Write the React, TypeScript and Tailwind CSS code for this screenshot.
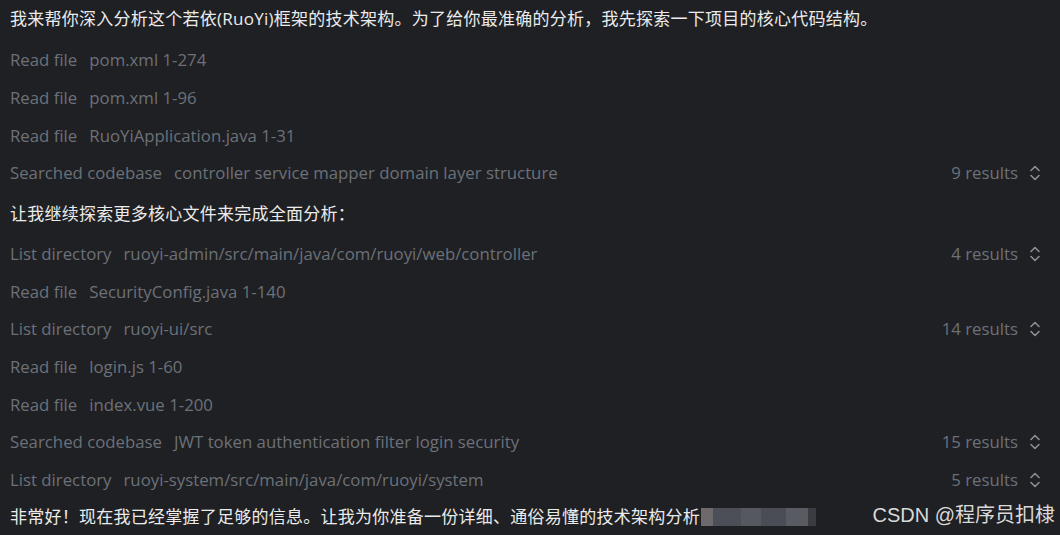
import React from "react";

type Row =
  | { kind: "zh"; text: string }
  | { kind: "tool"; label: string; value: string; results?: string };

const rows: Row[] = [
  { kind: "tool", label: "Read file", value: "pom.xml 1-274" },
  { kind: "tool", label: "Read file", value: "pom.xml 1-96" },
  { kind: "tool", label: "Read file", value: "RuoYiApplication.java 1-31" },
  { kind: "tool", label: "Searched codebase", value: "controller service mapper domain layer structure", results: "9 results" },
  { kind: "zh", text: "让我继续探索更多核心文件来完成全面分析：" },
  { kind: "tool", label: "List directory", value: "ruoyi-admin/src/main/java/com/ruoyi/web/controller", results: "4 results" },
  { kind: "tool", label: "Read file", value: "SecurityConfig.java 1-140" },
  { kind: "tool", label: "List directory", value: "ruoyi-ui/src", results: "14 results" },
  { kind: "tool", label: "Read file", value: "login.js 1-60" },
  { kind: "tool", label: "Read file", value: "index.vue 1-200" },
  { kind: "tool", label: "Searched codebase", value: "JWT token authentication filter login security", results: "15 results" },
  { kind: "tool", label: "List directory", value: "ruoyi-system/src/main/java/com/ruoyi/system", results: "5 results" },
];

function Chevrons() {
  return (
    <svg width="14" height="18" viewBox="0 0 14 18" fill="none" stroke="#8a8f96" strokeWidth="1.6" strokeLinecap="round" strokeLinejoin="round">
      <path d="M3 6.5 L7 2.5 L11 6.5" />
      <path d="M3 11.5 L7 15.5 L11 11.5" />
    </svg>
  );
}

export default function App() {
  const font = { fontFamily: '"Open Sans", "Noto Sans CJK SC", sans-serif' };
  return (
    <div className="w-[1060px] h-[535px] bg-[#1f2023] overflow-hidden relative" style={font}>
      <div className="flex flex-col pl-[10px] pr-[18px]">
        <div className="h-[41px] pb-[4px] flex items-center text-[17px] tracking-[0.25px] text-[#ebebeb]">
          我来帮你深入分析这个若依(RuoYi)框架的技术架构。为了给你最准确的分析，我先探索一下项目的核心代码结构。
        </div>
        {rows.map((r, i) =>
          r.kind === "zh" ? (
            <div key={i} className="h-[43px] flex items-center text-[17px] tracking-[0.25px] text-[#ebebeb]">
              {r.text}
            </div>
          ) : (
            <div key={i} className="h-[37.7px] flex items-center justify-between text-[16.8px] text-[#6c7179]">
              <div className="flex items-center">
                <span>{r.label}</span>
                <span className="ml-[12px]">{r.value}</span>
              </div>
              {r.results && (
                <div className="flex items-center gap-[10px]">
                  <span>{r.results}</span>
                  <Chevrons />
                </div>
              )}
            </div>
          )
        )}
        <div className="h-[36px] flex items-center text-[17px] tracking-[0.25px] text-[#ebebeb]">
          <span>非常好！现在我已经掌握了足够的信息。让我为你准备一份详细、通俗易懂的技术架构分析</span>
          <span className="inline-flex h-[18px] ml-[1px]">
            <span className="w-[12px] bg-[#6e6a6c]" />
            <span className="w-[28px] bg-[#4c4f57]" />
            <span className="w-[20px] bg-[#55585f]" />
            <span className="w-[25px] bg-[#4a4d55]" />
            <span className="w-[22px] bg-[#595b62]" />
            <span className="w-[8px] bg-[#3a3c42]" />
          </span>
        </div>
      </div>
      <div className="absolute right-[5px] bottom-[5px] text-[20px] text-[#d9d9d9]" style={{ fontFamily: '"Liberation Sans", "Noto Sans CJK SC", sans-serif' }}>
        CSDN @程序员扣棣
      </div>
    </div>
  );
}
